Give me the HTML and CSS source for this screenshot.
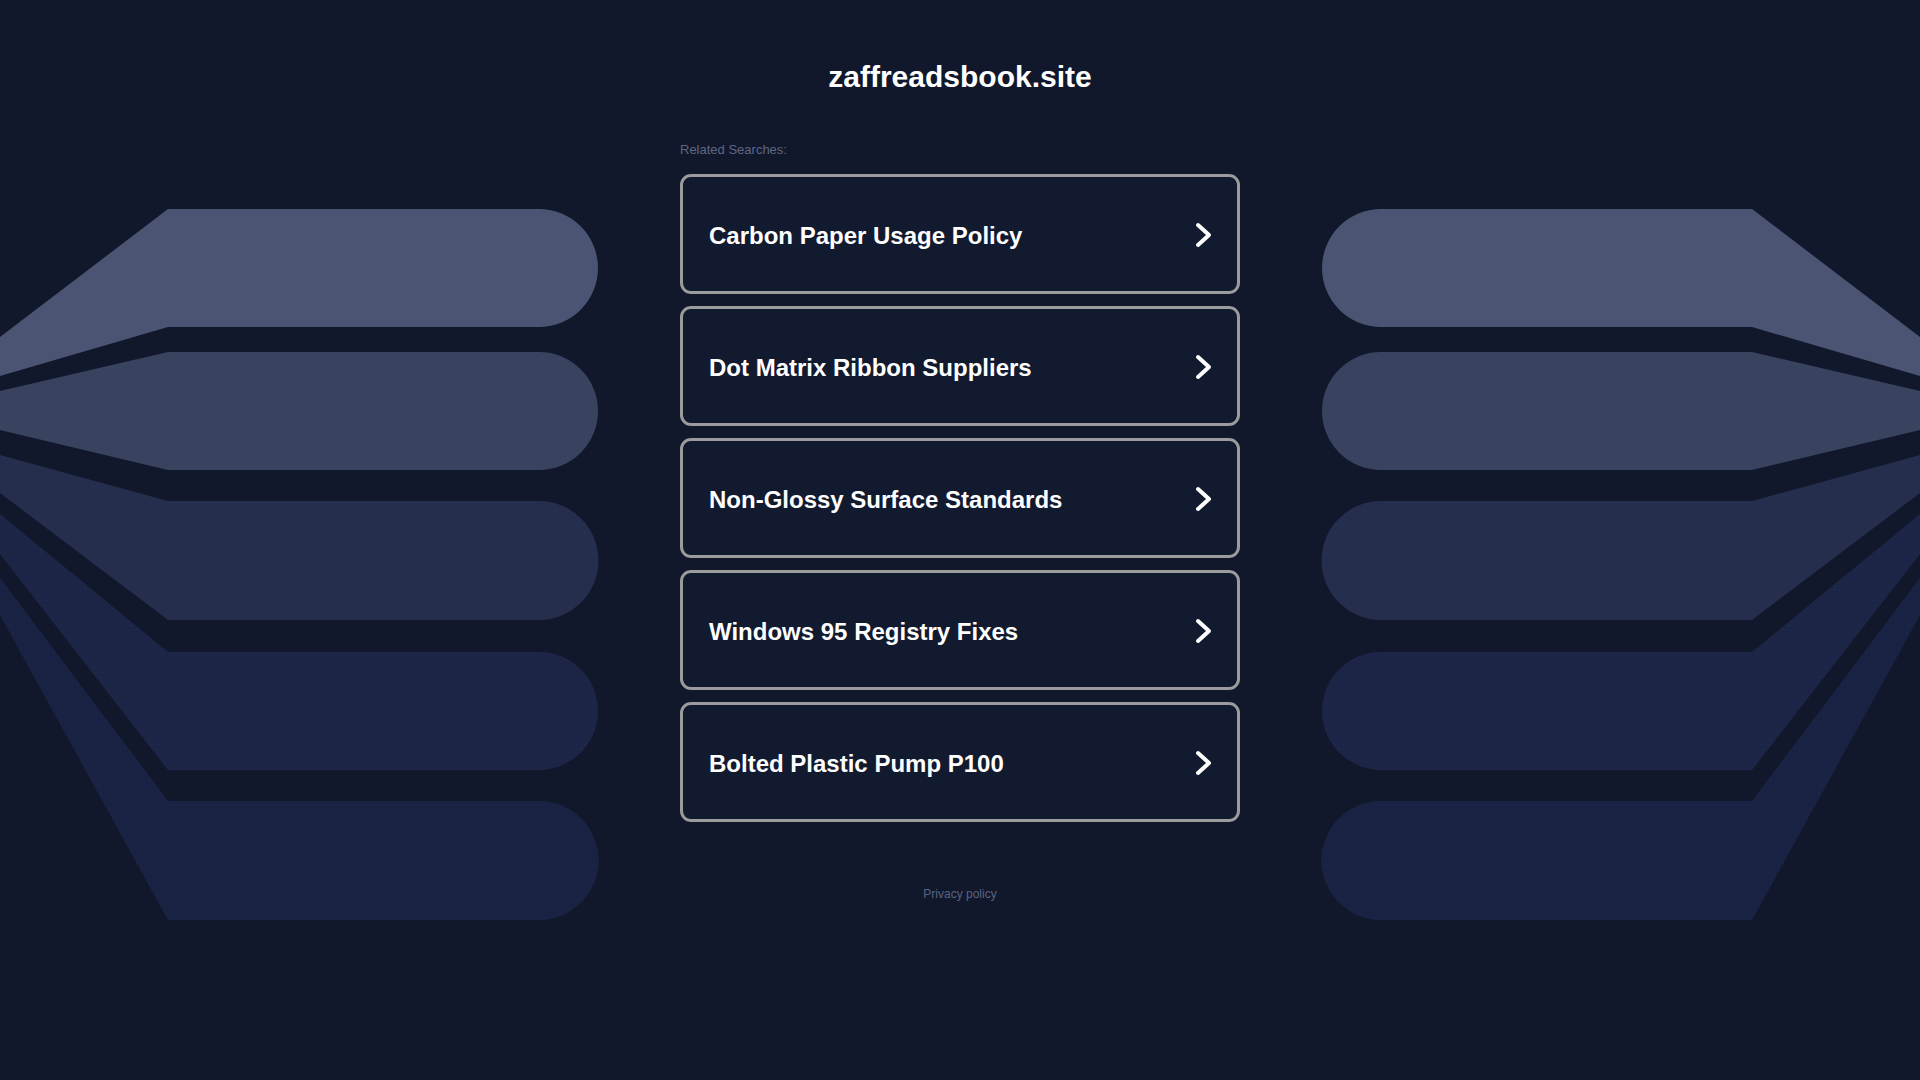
FILE: index.html
```html
<!DOCTYPE html>
<html lang="en">
<head>
<meta charset="utf-8">
<title>zaffreadsbook.site</title>
<link rel="stylesheet" href="styles.css">
</head>
<body>
<div class="page">
  <div class="art art-left">
    <svg viewBox="0 200 600 730" width="600" height="730" xmlns="http://www.w3.org/2000/svg">
      <defs>
        <pattern id="dotsA" width="4" height="4" patternUnits="userSpaceOnUse">
          <rect width="4" height="4" fill="#1c2546"/>
          <rect x="1" y="1" width="1" height="1" fill="#232d52"/>
        </pattern>
        <pattern id="dotsB" width="4" height="4" patternUnits="userSpaceOnUse">
          <rect width="4" height="4" fill="#192242"/>
          <rect x="1" y="1" width="1" height="1" fill="#212b4e"/>
        </pattern>
      </defs>
      <path d="M0,337 L168,209 H539 A59,59 0 0 1 539,327 H168 L0,376 Z" fill="#4b5573"/>
      <path d="M0,391 L168,352 H539 A59,59 0 0 1 539,470 H168 L0,430 Z" fill="#394360"/>
      <path d="M0,455 L168,501 H539 A59.5,59.5 0 0 1 539,620 H168 L0,493 Z" fill="#252e4c"/>
      <path d="M0,514 L168,652 H539 A59,59 0 0 1 539,770 H168 L0,554 Z" fill="url(#dotsA)"/>
      <path d="M0,578 L168,801 H539 A59.5,59.5 0 0 1 539,920 H168 L0,615 Z" fill="url(#dotsB)"/>
    </svg>
  </div>

  <main class="center">
    <h1 class="domain">zaffreadsbook.site</h1>
    <div class="related">Related Searches:</div>
    <div class="list">
      <a class="card" href="#"><span class="card-text">Carbon Paper Usage Policy</span><svg class="chev" viewBox="0 0 18 26" width="18" height="26"><polyline points="3,3 14,13 3,23"/></svg></a>
      <a class="card" href="#"><span class="card-text">Dot Matrix Ribbon Suppliers</span><svg class="chev" viewBox="0 0 18 26" width="18" height="26"><polyline points="3,3 14,13 3,23"/></svg></a>
      <a class="card" href="#"><span class="card-text">Non-Glossy Surface Standards</span><svg class="chev" viewBox="0 0 18 26" width="18" height="26"><polyline points="3,3 14,13 3,23"/></svg></a>
      <a class="card" href="#"><span class="card-text">Windows 95 Registry Fixes</span><svg class="chev" viewBox="0 0 18 26" width="18" height="26"><polyline points="3,3 14,13 3,23"/></svg></a>
      <a class="card" href="#"><span class="card-text">Bolted Plastic Pump P100</span><svg class="chev" viewBox="0 0 18 26" width="18" height="26"><polyline points="3,3 14,13 3,23"/></svg></a>
    </div>
    <a class="privacy" href="#">Privacy policy</a>
  </main>

  <div class="art art-right">
    <svg viewBox="0 200 600 730" width="600" height="730" xmlns="http://www.w3.org/2000/svg">
      <defs>
        <pattern id="dotsC" width="4" height="4" patternUnits="userSpaceOnUse">
          <rect width="4" height="4" fill="#1c2546"/>
          <rect x="1" y="1" width="1" height="1" fill="#232d52"/>
        </pattern>
        <pattern id="dotsD" width="4" height="4" patternUnits="userSpaceOnUse">
          <rect width="4" height="4" fill="#192242"/>
          <rect x="1" y="1" width="1" height="1" fill="#212b4e"/>
        </pattern>
      </defs>
      <path d="M0,337 L168,209 H539 A59,59 0 0 1 539,327 H168 L0,376 Z" fill="#4b5573"/>
      <path d="M0,391 L168,352 H539 A59,59 0 0 1 539,470 H168 L0,430 Z" fill="#394360"/>
      <path d="M0,455 L168,501 H539 A59.5,59.5 0 0 1 539,620 H168 L0,493 Z" fill="#252e4c"/>
      <path d="M0,514 L168,652 H539 A59,59 0 0 1 539,770 H168 L0,554 Z" fill="url(#dotsC)"/>
      <path d="M0,578 L168,801 H539 A59.5,59.5 0 0 1 539,920 H168 L0,615 Z" fill="url(#dotsD)"/>
    </svg>
  </div>
</div>
</body>
</html>
```

FILE: styles.css
```css
html, body {
  margin: 0;
  padding: 0;
  background: #11182c;
  min-height: 100%;
}

body {
  font-family: "Liberation Sans", Arial, sans-serif;
  color: #ffffff;
  height: 1080px;
  overflow: hidden;
}

.page {
  display: grid;
  grid-template-columns: 600px 560px 600px;
  column-gap: 80px;
  width: 1920px;
}

.art {
  padding-top: 200px;
  height: 730px;
}

.art svg {
  display: block;
}

.art-right svg {
  transform: scaleX(-1);
}

.center {
  display: flex;
  flex-direction: column;
  padding-top: 59px;
}

.domain {
  margin: 0;
  font-size: 30px;
  line-height: 36px;
  font-weight: 700;
  text-align: center;
  color: #ffffff;
}

.related {
  margin-top: 47px;
  font-size: 13px;
  line-height: 16px;
  color: #5e6784;
}

.list {
  margin-top: 16px;
  display: flex;
  flex-direction: column;
  gap: 12px;
}

.card {
  box-sizing: border-box;
  height: 120px;
  border: 3px solid #9b9b9b;
  border-radius: 11px;
  padding: 0 26px;
  display: flex;
  align-items: center;
  justify-content: space-between;
  text-decoration: none;
  color: #ffffff;
  background: #121a2f;
}

.card-text {
  font-size: 24px;
  font-weight: 700;
  line-height: 28px;
  padding-top: 3px;
}

.chev {
  display: block;
  margin-right: -2px;
  margin-top: 1px;
}

.chev polyline {
  fill: none;
  stroke: #ffffff;
  stroke-width: 4;
  stroke-linecap: round;
  stroke-linejoin: round;
}

.privacy {
  margin-top: 64px;
  align-self: center;
  font-size: 12px;
  line-height: 16px;
  color: #5a6380;
  text-decoration: none;
}
```
